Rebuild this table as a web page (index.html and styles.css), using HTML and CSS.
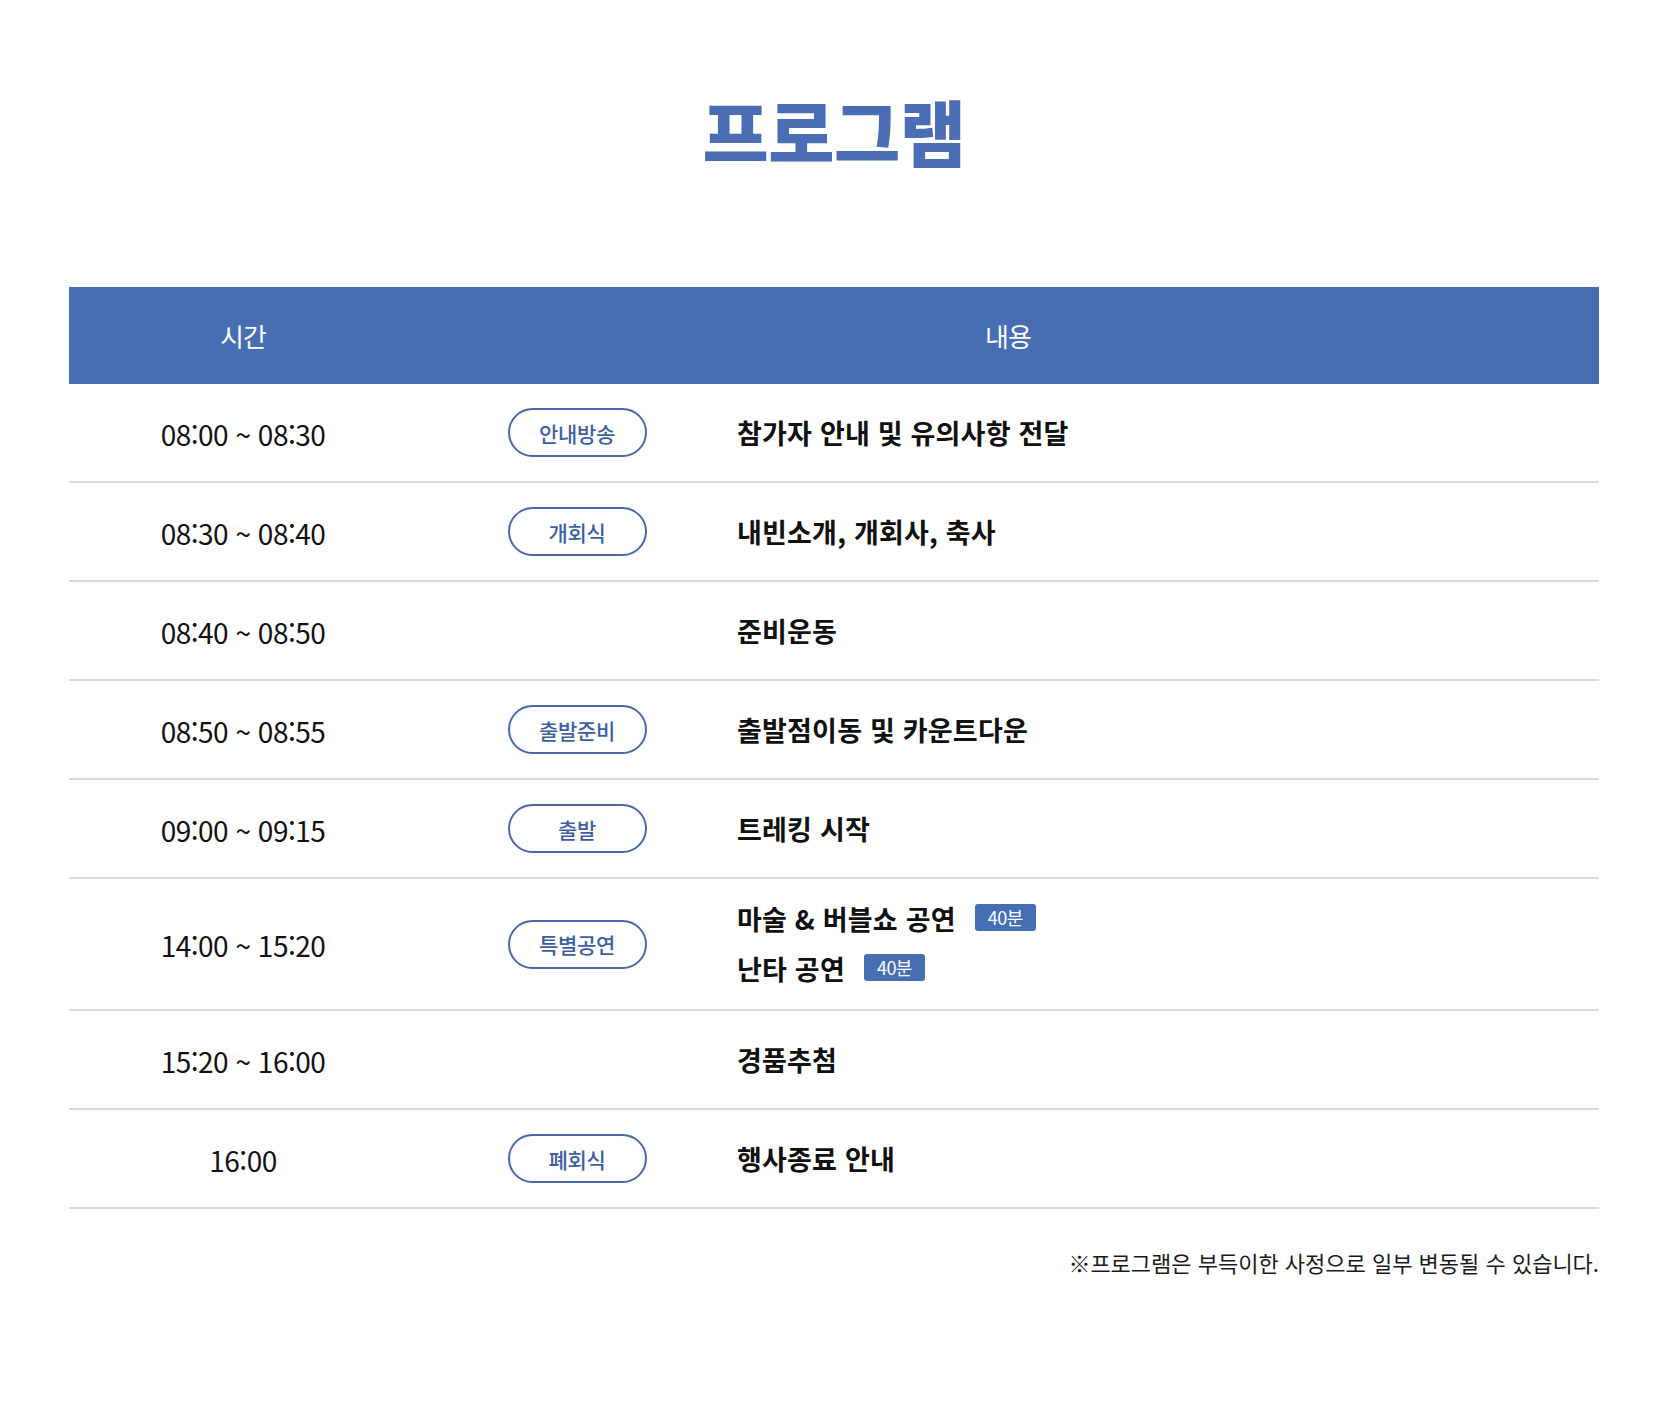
FILE: index.html
```html
<!DOCTYPE html>
<html lang="ko">
<head>
<meta charset="utf-8">
<title>프로그램</title>
<link rel="stylesheet" href="styles.css">
</head>
<body>
<main class="program">
  <h1 class="title">프로그램</h1>
  <div class="schedule">
    <div class="schedule-head">
      <div class="head-time">시간</div>
      <div class="head-content">내용</div>
    </div>
    <div class="row">
      <div class="time">08:00 ~ 08:30</div>
      <div class="tag-cell"><span class="badge">안내방송</span></div>
      <div class="content"><p class="item">참가자 안내 및 유의사항 전달</p></div>
    </div>
    <div class="row">
      <div class="time">08:30 ~ 08:40</div>
      <div class="tag-cell"><span class="badge">개회식</span></div>
      <div class="content"><p class="item">내빈소개, 개회사, 축사</p></div>
    </div>
    <div class="row">
      <div class="time">08:40 ~ 08:50</div>
      <div class="tag-cell"></div>
      <div class="content"><p class="item">준비운동</p></div>
    </div>
    <div class="row">
      <div class="time">08:50 ~ 08:55</div>
      <div class="tag-cell"><span class="badge">출발준비</span></div>
      <div class="content"><p class="item">출발점이동 및 카운트다운</p></div>
    </div>
    <div class="row">
      <div class="time">09:00 ~ 09:15</div>
      <div class="tag-cell"><span class="badge">출발</span></div>
      <div class="content"><p class="item">트레킹 시작</p></div>
    </div>
    <div class="row row-multi">
      <div class="time">14:00 ~ 15:20</div>
      <div class="tag-cell"><span class="badge">특별공연</span></div>
      <div class="content">
        <p class="item">마술 &amp; 버블쇼 공연 <span class="duration">40분</span></p>
        <p class="item">난타 공연 <span class="duration">40분</span></p>
      </div>
    </div>
    <div class="row">
      <div class="time">15:20 ~ 16:00</div>
      <div class="tag-cell"></div>
      <div class="content"><p class="item">경품추첨</p></div>
    </div>
    <div class="row">
      <div class="time">16:00</div>
      <div class="tag-cell"><span class="badge">폐회식</span></div>
      <div class="content"><p class="item">행사종료 안내</p></div>
    </div>
  </div>
  <p class="note">※프로그램은 부득이한 사정으로 일부 변동될 수 있습니다.</p>
</main>
</body>
</html>
```

FILE: styles.css
```css
* {
  box-sizing: border-box;
}

html, body {
  margin: 0;
  padding: 0;
  background: #ffffff;
}

body {
  font-family: "Noto Sans CJK KR", "Noto Sans", sans-serif;
  color: #111111;
}

.program {
  width: 1530px;
  margin: 0 auto;
  padding-top: 94px;
}

.title {
  margin: 0;
  font-size: 72px;
  line-height: 72px;
  font-weight: 900;
  letter-spacing: -0.5px;
  text-align: center;
  color: #4a6db3;
}

.schedule {
  margin-top: 121px;
}

.schedule-head {
  display: grid;
  grid-template-columns: 348px 1fr;
  height: 97px;
  align-items: center;
  background: #476db3;
  color: #ffffff;
  font-size: 26px;
  font-weight: 400;
  letter-spacing: -1px;
  text-align: center;
}

.row {
  display: grid;
  grid-template-columns: 348px 320px 1fr;
  align-items: center;
  min-height: 99px;
  border-bottom: 2px solid #dadada;
}

.time {
  text-align: center;
  font-size: 28px;
  font-weight: 400;
  letter-spacing: -0.5px;
  color: #111111;
  padding-top: 2px;
}

.tag-cell {
  display: flex;
  justify-content: center;
}

.badge {
  display: inline-flex;
  align-items: center;
  justify-content: center;
  width: 139px;
  height: 49px;
  border: 2.5px solid #4a68a8;
  border-radius: 25px;
  font-size: 21px;
  font-weight: 500;
  color: #3e5f9f;
  letter-spacing: -0.3px;
}

.content {
  padding-left: 0;
}

.item {
  margin: 0;
  font-size: 27px;
  font-weight: 700;
  letter-spacing: 0.2px;
  color: #111111;
  display: flex;
  align-items: center;
}

.row-multi {
  min-height: 132px;
}

.row-multi .content {
  padding: 14px 0;
}

.row-multi .item {
  line-height: 50px;
}

.duration {
  display: inline-flex;
  align-items: center;
  justify-content: center;
  width: 61px;
  height: 27px;
  margin-left: 19px;
  margin-top: -4px;
  border-radius: 3px;
  background: #476db3;
  color: #ffffff;
  font-size: 18px;
  font-weight: 400;
  letter-spacing: -0.5px;
}

.note {
  margin: 38px 0 0;
  text-align: right;
  font-size: 22px;
  line-height: 30px;
  letter-spacing: 0;
  color: #1a1a1a;
}
```
